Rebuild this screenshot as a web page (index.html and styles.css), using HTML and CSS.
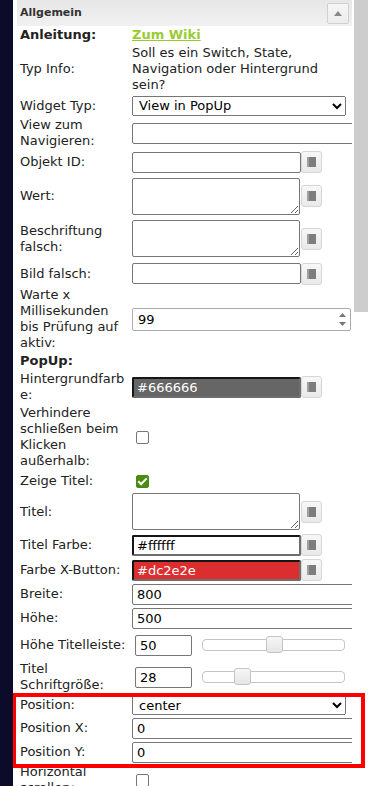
FILE: index.html
```html
<!DOCTYPE html>
<html lang="de">
<head>
    <meta charset="UTF-8">
    <meta name="viewport" content="width=device-width, initial-scale=1.0">
    <title>Widget Attribute</title>
    <link rel="stylesheet" href="styles.css">
</head>
<body>
<div class="app">
    <div class="side-strip"></div>

    <div class="panel">
        <div class="group-head">
            <span>Allgemein</span>
            <button class="collapse-btn">
                <svg width="8" height="5" viewBox="0 0 8 5"><path d="M0 5 L4 0 L8 5 Z" fill="#888"/></svg>
            </button>
        </div>

        <div class="attr-form">
            <div class="lbl strong">Anleitung:</div>
            <div><a class="wiki" href="#">Zum Wiki</a></div>

            <div class="lbl">Typ Info:</div>
            <div class="info">Soll es ein Switch, State, Navigation oder Hintergrund sein?</div>

            <div class="lbl">Widget Typ:</div>
            <div>
                <select class="sel">
                    <option>View in PopUp</option>
                </select>
            </div>

            <div class="lbl">View zum Navigieren:</div>
            <div><input class="txt" type="text"></div>

            <div class="lbl">Objekt ID:</div>
            <div class="field">
                <input class="txt short" type="text">
                <button class="pick"><svg class="book" width="9" height="10" viewBox="0 0 9 10"><rect x="2" y="0" width="7" height="10" fill="#7d7d7d"/><rect x="0" y="0" width="2" height="10" fill="#b9b9b9"/><path d="M0 1h2M0 3h2M0 5h2M0 7h2M0 9h2" stroke="#888" stroke-width="1"/></svg></button>
            </div>

            <div class="lbl">Wert:</div>
            <div class="field">
                <textarea class="area"></textarea>
                <button class="pick"><svg class="book" width="9" height="10" viewBox="0 0 9 10"><rect x="2" y="0" width="7" height="10" fill="#7d7d7d"/><rect x="0" y="0" width="2" height="10" fill="#b9b9b9"/><path d="M0 1h2M0 3h2M0 5h2M0 7h2M0 9h2" stroke="#888" stroke-width="1"/></svg></button>
            </div>

            <div class="lbl">Beschriftung falsch:</div>
            <div class="field">
                <textarea class="area"></textarea>
                <button class="pick"><svg class="book" width="9" height="10" viewBox="0 0 9 10"><rect x="2" y="0" width="7" height="10" fill="#7d7d7d"/><rect x="0" y="0" width="2" height="10" fill="#b9b9b9"/><path d="M0 1h2M0 3h2M0 5h2M0 7h2M0 9h2" stroke="#888" stroke-width="1"/></svg></button>
            </div>

            <div class="lbl">Bild falsch:</div>
            <div class="field">
                <input class="txt short" type="text">
                <button class="pick"><svg class="book" width="9" height="10" viewBox="0 0 9 10"><rect x="2" y="0" width="7" height="10" fill="#7d7d7d"/><rect x="0" y="0" width="2" height="10" fill="#b9b9b9"/><path d="M0 1h2M0 3h2M0 5h2M0 7h2M0 9h2" stroke="#888" stroke-width="1"/></svg></button>
            </div>

            <div class="lbl">Warte x Millisekunden bis Prüfung auf aktiv:</div>
            <div>
                <div class="num">
                    <input type="text" value="99">
                    <span class="spin">
                        <svg width="7" height="4" viewBox="0 0 7 4"><path d="M0 4 L3.5 0 L7 4 Z" fill="#777"/></svg>
                        <svg width="7" height="4" viewBox="0 0 7 4"><path d="M0 0 L3.5 4 L7 0 Z" fill="#777"/></svg>
                    </span>
                </div>
            </div>

            <div class="lbl strong">PopUp:</div>
            <div></div>

            <div class="lbl">Hintergrundfarbe:</div>
            <div class="field">
                <input class="txt short color-in dark" type="text" value="#666666">
                <button class="pick"><svg class="book" width="9" height="10" viewBox="0 0 9 10"><rect x="2" y="0" width="7" height="10" fill="#7d7d7d"/><rect x="0" y="0" width="2" height="10" fill="#b9b9b9"/><path d="M0 1h2M0 3h2M0 5h2M0 7h2M0 9h2" stroke="#888" stroke-width="1"/></svg></button>
            </div>

            <div class="lbl">Verhindere schließen beim Klicken außerhalb:</div>
            <div><input class="chk" type="checkbox"></div>

            <div class="lbl">Zeige Titel:</div>
            <div><input class="chk" type="checkbox" checked></div>

            <div class="lbl">Titel:</div>
            <div class="field">
                <textarea class="area"></textarea>
                <button class="pick"><svg class="book" width="9" height="10" viewBox="0 0 9 10"><rect x="2" y="0" width="7" height="10" fill="#7d7d7d"/><rect x="0" y="0" width="2" height="10" fill="#b9b9b9"/><path d="M0 1h2M0 3h2M0 5h2M0 7h2M0 9h2" stroke="#888" stroke-width="1"/></svg></button>
            </div>

            <div class="lbl">Titel Farbe:</div>
            <div class="field">
                <input class="txt short color-in" type="text" value="#ffffff">
                <button class="pick"><svg class="book" width="9" height="10" viewBox="0 0 9 10"><rect x="2" y="0" width="7" height="10" fill="#7d7d7d"/><rect x="0" y="0" width="2" height="10" fill="#b9b9b9"/><path d="M0 1h2M0 3h2M0 5h2M0 7h2M0 9h2" stroke="#888" stroke-width="1"/></svg></button>
            </div>

            <div class="lbl">Farbe X-Button:</div>
            <div class="field">
                <input class="txt short color-in red" type="text" value="#dc2e2e">
                <button class="pick"><svg class="book" width="9" height="10" viewBox="0 0 9 10"><rect x="2" y="0" width="7" height="10" fill="#7d7d7d"/><rect x="0" y="0" width="2" height="10" fill="#b9b9b9"/><path d="M0 1h2M0 3h2M0 5h2M0 7h2M0 9h2" stroke="#888" stroke-width="1"/></svg></button>
            </div>

            <div class="lbl">Breite:</div>
            <div><input class="txt" type="text" value="800"></div>

            <div class="lbl">Höhe:</div>
            <div><input class="txt" type="text" value="500"></div>

            <div class="lbl">Höhe Titelleiste:</div>
            <div class="field">
                <input class="txt tiny" type="text" value="50">
                <div class="track"><span class="handle" style="left: 50%"></span></div>
            </div>

            <div class="lbl">Titel Schriftgröße:</div>
            <div class="field">
                <input class="txt tiny" type="text" value="28">
                <div class="track"><span class="handle" style="left: 28%"></span></div>
            </div>

            <div class="lbl">Position:</div>
            <div>
                <select class="sel">
                    <option>center</option>
                </select>
            </div>

            <div class="lbl">Position X:</div>
            <div><input class="txt" type="text" value="0"></div>

            <div class="lbl">Position Y:</div>
            <div><input class="txt" type="text" value="0"></div>

            <div class="lbl">Horizontal scrollen:</div>
            <div><input class="chk" type="checkbox"></div>
        </div>
    </div>

    <div class="scrollbar"><div class="thumb"></div></div>

    <!-- marker round the position settings -->
    <div class="highlight"></div>
</div>
</body>
</html>
```

FILE: styles.css
```css
body {
    margin: 0;
    font-family: "DejaVu Sans", Verdana, sans-serif;
    font-size: 13px;
    line-height: 16px;
    color: #222;
    background: #fff;
}

.app {
    position: relative;
    display: flex;
    width: 368px;
    height: 786px;
    overflow: hidden;
}

.side-strip {
    width: 13px;
    flex-shrink: 0;
    background-color: #0c0c2a;
}

.panel {
    width: 339px;
    flex-shrink: 0;
    padding-left: 4px;
    box-sizing: border-box;
    overflow: hidden;
}

.scrollbar {
    width: 14px;
    margin-left: 2px;
    flex-shrink: 0;
}

.scrollbar .thumb {
    height: 312px;
    background-color: #cdcdcd;
}

.group-head {
    height: 26px;
    display: flex;
    align-items: center;
    justify-content: space-between;
    padding: 0 3px 0 3px;
    background: linear-gradient(#e7e7e7, #f1f1f1);
    font-size: 11px;
    font-weight: bold;
    color: #333;
}

.collapse-btn {
    width: 22px;
    height: 21px;
    padding: 0;
    display: flex;
    align-items: center;
    justify-content: center;
    background: linear-gradient(#f6f6f6, #ececec);
    border: 1px solid #d0d0d0;
    border-radius: 2px;
}

.attr-form {
    display: grid;
    grid-template-columns: 108px 1fr;
    grid-template-rows: 18px 50px 23px 32px 26px 42px 43px 27px 64px 20px 32px 68px 20px 41px 26px 24px 24px 24px 30px 34px 22px 24px 24px 32px;
    column-gap: 4px;
    align-items: center;
    margin-left: 3px;
}

.lbl {
    overflow-wrap: anywhere;
}

.strong {
    font-weight: bold;
}

.wiki {
    color: #99cc33;
    font-weight: bold;
}

.info {
    width: 220px;
}

.field {
    display: flex;
    align-items: center;
}

input, select, textarea, button {
    font-family: inherit;
    font-size: 13px;
}

.txt {
    width: 230px;
    height: 21px;
    box-sizing: border-box;
    margin: 0;
    padding: 0 4px;
    border: 1px solid #767676;
    border-radius: 2px;
    color: #000;
    background: #fff;
}

.txt.short {
    width: 169px;
}

.txt.tiny {
    width: 57px;
    margin-left: 3px;
}

.color-in {
    border-width: 2px;
    border-style: solid;
    border-color: #161616 #6e6e6e #6e6e6e #161616;
    padding-left: 3px;
}

.color-in.dark {
    background-color: #666666;
    color: #fff;
}

.color-in.red {
    background-color: #dc2e2e;
    color: #fff;
}

.area {
    width: 168px;
    height: 37px;
    box-sizing: border-box;
    margin: 0 1px 0 0;
    border: 1px solid #767676;
    border-radius: 2px;
}

.pick {
    width: 21px;
    height: 22px;
    padding: 0;
    display: flex;
    align-items: center;
    justify-content: center;
    background: linear-gradient(#f7f7f7, #e9e9e9);
    border: 1px solid #d6d6d6;
    border-radius: 3px;
}

.sel {
    width: 214px;
    height: 20px;
    margin: 0;
    padding: 0 0 0 2px;
    color: #000;
}

.num {
    width: 219px;
    height: 23px;
    box-sizing: border-box;
    display: flex;
    align-items: center;
    border: 1px solid #ababab;
    border-radius: 2px;
}

.num input {
    flex: 1;
    min-width: 0;
    border: 0;
    padding: 0 5px;
    outline: none;
}

.spin {
    width: 15px;
    display: flex;
    flex-direction: column;
    align-items: center;
    gap: 5px;
}

.chk {
    appearance: none;
    width: 13px;
    height: 13px;
    margin: 0 0 0 4px;
    display: block;
    position: relative;
    border: 1px solid #767676;
    border-radius: 2px;
    background: #fff;
}

.chk:checked {
    background-color: #4c8a14;
    border-color: #4c8a14;
}

.chk:checked::after {
    content: "";
    position: absolute;
    left: 3px;
    top: 0px;
    width: 3px;
    height: 7px;
    border: solid #fff;
    border-width: 0 2px 2px 0;
    transform: rotate(45deg);
}

.track {
    position: relative;
    width: 143px;
    height: 12px;
    box-sizing: border-box;
    margin-left: 10px;
    border: 1px solid #c5c5c5;
    border-radius: 4px;
    background: #fff;
}

.handle {
    position: absolute;
    top: -4px;
    width: 17px;
    height: 17px;
    box-sizing: border-box;
    margin-left: -8px;
    border: 1px solid #c5c5c5;
    border-radius: 3px;
    background: linear-gradient(#f6f6f6, #e6e6e6);
}

.highlight {
    position: absolute;
    left: 13px;
    top: 693px;
    width: 352px;
    height: 75px;
    box-sizing: border-box;
    border: 4px solid #ff0000;
    border-left-width: 3px;
}
```
